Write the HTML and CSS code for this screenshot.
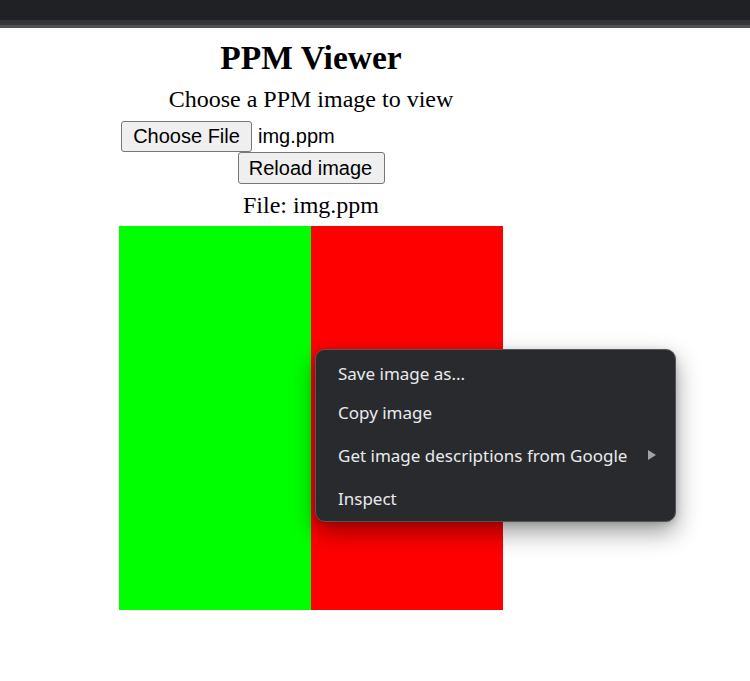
FILE: index.html
```html
<!DOCTYPE html>
<html>
<head>
<meta charset="utf-8">
<link rel="stylesheet" href="styles.css">
</head>
<body>
<div class="chrome-bar">
  <div class="bar-top"></div>
  <div class="bar-band"></div>
  <div class="bar-edge"></div>
</div>
<main class="app">
  <h1 class="title">PPM Viewer</h1>
  <p class="prompt">Choose a PPM image to view</p>
  <div class="file-row">
    <span class="btn btn-choose">Choose File</span>
    <span class="file-name">img.ppm</span>
  </div>
  <button class="btn btn-reload">Reload image</button>
  <p class="file-label">File: img.ppm</p>
  <div class="image">
    <div class="half green"></div>
    <div class="half red"></div>
  </div>
</main>
<div class="context-menu">
  <div class="menu-item item-save">Save image as...</div>
  <div class="menu-item item-copy">Copy image</div>
  <div class="menu-item item-google">
    <span>Get image descriptions from Google</span>
    <svg class="submenu-arrow" width="8" height="10" viewBox="0 0 8 10"><path d="M0 0 L8 5 L0 10 Z" fill="#a0a2a6"/></svg>
  </div>
  <div class="menu-item item-inspect">Inspect</div>
</div>
</body>
</html>
```

FILE: styles.css
```css
html, body {
  margin: 0;
  padding: 0;
  background: #ffffff;
}

body {
  width: 750px;
  height: 681px;
  overflow: hidden;
  position: relative;
  font-family: "Liberation Serif", "Times New Roman", serif;
  color: #000;
}

.chrome-bar {
  display: flex;
  flex-direction: column;
}

.bar-top {
  height: 20px;
  background: #202124;
}

.bar-band {
  height: 5px;
  background: #35363a;
}

.bar-edge {
  height: 3px;
  background: #505155;
}

.app {
  margin-left: 119px;
  width: 384px;
  text-align: center;
  padding-top: 11px;
}

.title {
  margin: 0;
  font-size: 33.5px;
  line-height: 38px;
  font-weight: bold;
}

.prompt {
  margin: 9px 0 0;
  font-size: 24px;
  line-height: 27px;
}

.file-row {
  margin-top: 8px;
  height: 31px;
  display: flex;
  align-items: center;
  padding-left: 2px;
}

.btn {
  box-sizing: border-box;
  display: inline-flex;
  align-items: center;
  justify-content: center;
  font-family: "Liberation Sans", Arial, sans-serif;
  font-size: 20px;
  color: #000;
  background: #efefef;
  border: 1px solid #767676;
  border-radius: 3px;
  padding: 0;
}

.btn-choose {
  width: 131px;
  height: 31px;
}

.file-name {
  margin-left: 6px;
  font-family: "Liberation Sans", Arial, sans-serif;
  font-size: 20px;
}

.btn-reload {
  display: flex;
  margin: 0 auto;
  width: 147px;
  height: 32px;
  padding-right: 1px;
}

.file-label {
  margin: 8px 0 0;
  font-size: 24px;
  line-height: 27px;
}

.image {
  margin-top: 7px;
  height: 384px;
  display: flex;
}

.half {
  flex: 1;
}

.green {
  background: #00ff00;
}

.red {
  background: #ff0000;
}

.context-menu {
  position: absolute;
  left: 315px;
  top: 349px;
  width: 361px;
  height: 173px;
  box-sizing: border-box;
  background: #292a2d;
  border: 1px solid #55565a;
  border-radius: 10px;
  box-shadow: 0 10px 24px rgba(0, 0, 0, 0.4), 0 2px 6px rgba(0, 0, 0, 0.15);
  padding-top: 4px;
  font-family: "Noto Sans", "Open Sans", sans-serif;
  font-size: 17px;
  color: #e8eaed;
}

.menu-item {
  display: flex;
  align-items: center;
  justify-content: space-between;
  padding: 0 19px 0 22px;
  height: 38px;
}

.item-copy {
  margin-top: 1px;
}

.item-google {
  margin-top: 5px;
}

.item-inspect {
  margin-top: 5px;
}

.submenu-arrow {
  display: block;
}
```
